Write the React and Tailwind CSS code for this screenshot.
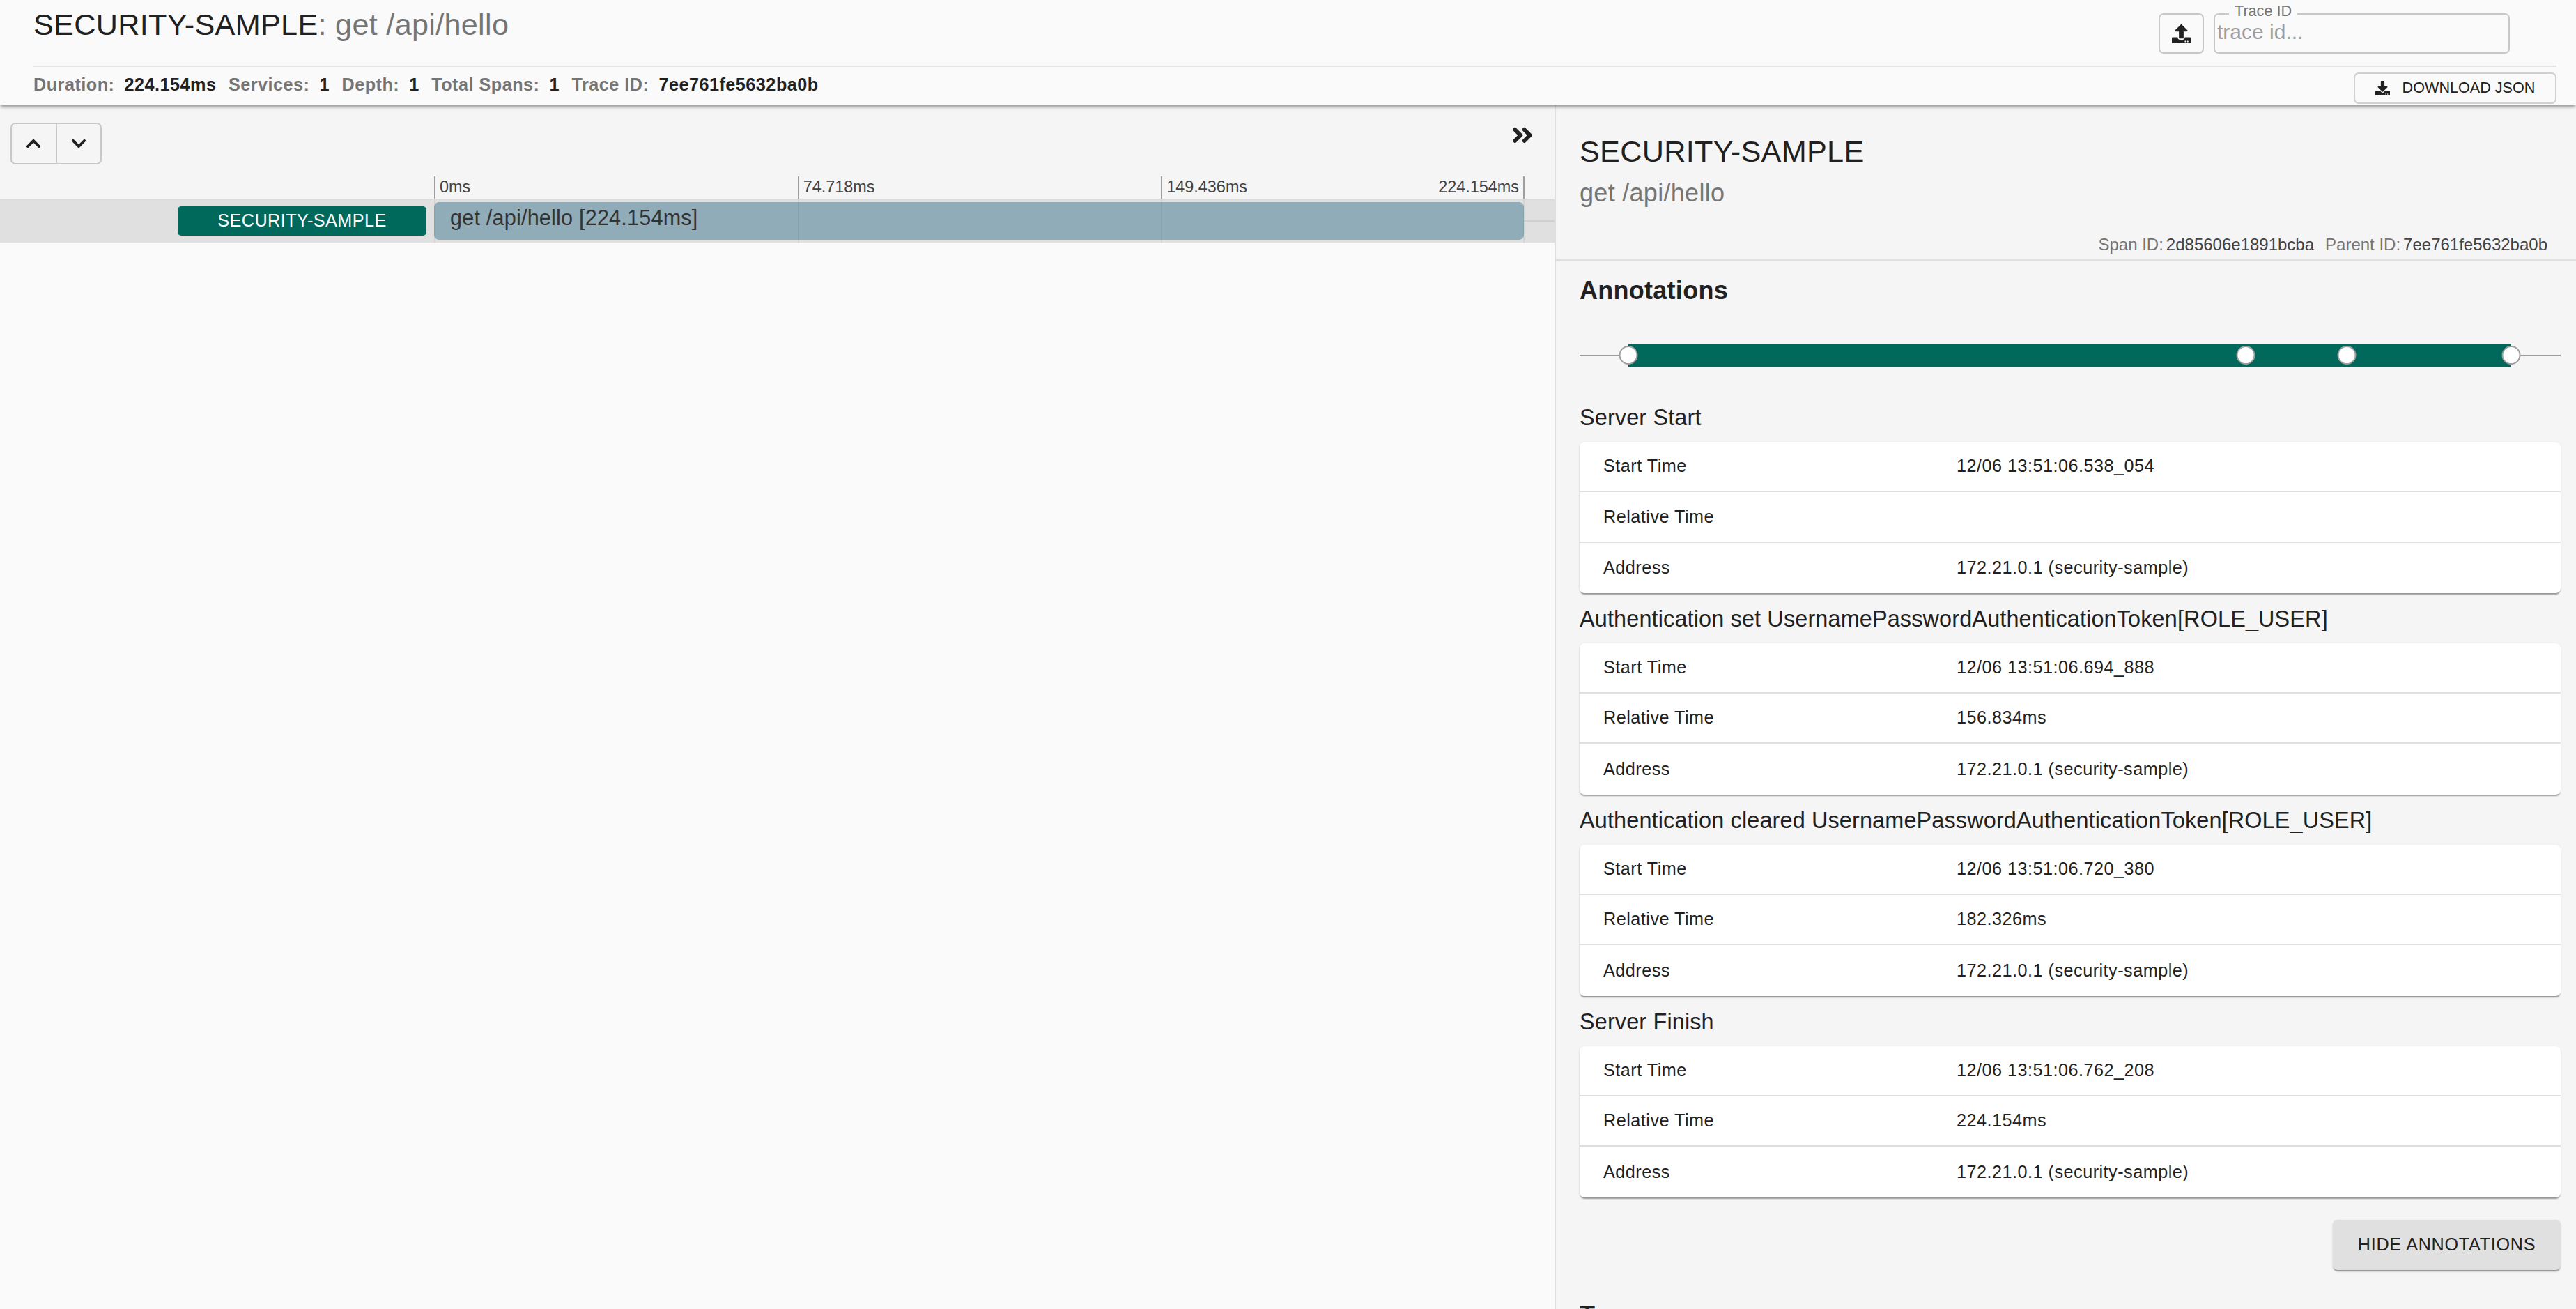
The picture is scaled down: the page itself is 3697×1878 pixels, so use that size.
import { FaAngleDoubleRight, FaChevronDown, FaChevronUp, FaDownload, FaUpload } from "react-icons/fa";

const DURATION = 224.154;

const annotations = [
  { title: "Server Start", start: "12/06 13:51:06.538_054", relative: "", at: 0 },
  { title: "Authentication set UsernamePasswordAuthenticationToken[ROLE_USER]", start: "12/06 13:51:06.694_888", relative: "156.834ms", at: 156.834 },
  { title: "Authentication cleared UsernamePasswordAuthenticationToken[ROLE_USER]", start: "12/06 13:51:06.720_380", relative: "182.326ms", at: 182.326 },
  { title: "Server Finish", start: "12/06 13:51:06.762_208", relative: "224.154ms", at: DURATION },
];

const summary = [
  ["Duration:", "224.154ms"],
  ["Services:", "1"],
  ["Depth:", "1"],
  ["Total Spans:", "1"],
  ["Trace ID:", "7ee761fe5632ba0b"],
];

const TableRow = ({ label, value, last }) => (
  <div className={`flex h-[72.3px] items-center pl-[34px] text-[25.2px] tracking-[0.5px] text-[#212121] ${last ? "" : "border-b-2 border-[#e0e0e0]"}`}>
    <span className="w-[507px]">{label}</span>
    <span>{value}</span>
  </div>
);

const AnnotationCard = ({ annotation }) => (
  <div className="mb-[11px]">
    <h6 className="mb-[8px] flex h-[53px] items-center text-[32.4px] leading-none tracking-[0.15px] text-[#212121]">{annotation.title}</h6>
    <div className="rounded-[7px] bg-white shadow-[0_3px_2px_-1px_rgba(0,0,0,0.35),0_1px_3px_rgba(0,0,0,0.12)]">
      <TableRow label="Start Time" value={annotation.start} />
      <TableRow label="Relative Time" value={annotation.relative} />
      <TableRow label="Address" value="172.21.0.1 (security-sample)" last />
    </div>
  </div>
);

export default function App() {
  return (
    <div className="flex h-screen w-full flex-col overflow-hidden bg-[#fafafa] font-['Liberation_Sans',Arial,sans-serif] text-[#212121]">
      <header className="z-10 h-[150px] shrink-0 bg-[#fafafa] pl-[48px] pr-[28px] shadow-[0_4px_5px_-1px_rgba(0,0,0,0.45)]">
        <div className="flex h-[96px] items-start justify-between border-b-2 border-[#e5e5e5]">
          <h1 className="mt-[9px] text-[43.2px] leading-[52px] tracking-[0.3px]">
            SECURITY-SAMPLE<span className="text-[#757575]">: get /api/hello</span>
          </h1>
          <div className="mr-[67px] mt-[19px] flex gap-[14px]">
            <button className="flex h-[58px] w-[65px] items-center justify-center rounded-[7px] border-2 border-[#c8c8c8] text-[27px] text-[#212121]">
              <FaUpload />
            </button>
            <div className="relative h-[58px] w-[425px] rounded-[7px] border-2 border-[#c8c8c8] pl-[3px] text-[30px] leading-[50px] text-[#9e9e9e]">
              trace id...
              <span className="absolute left-[20px] top-[-18px] bg-[#fafafa] px-[8px] text-[21.6px] leading-[26px] text-[#757575]">Trace ID</span>
            </div>
          </div>
        </div>
        <div className="flex h-[52px] items-start justify-between">
          <div className="mt-[11px] flex gap-[17.5px] text-[25.2px] font-bold leading-[28px] tracking-[0.5px]">
            {summary.map(([label, value]) => (
              <span key={label} className="flex gap-[14px]">
                <span className="text-[#757575]">{label}</span>
                <span>{value}</span>
              </span>
            ))}
          </div>
          <button className="mt-[8px] flex h-[45px] w-[291px] items-center justify-center gap-[18px] rounded-[7px] border-2 border-[#d0d0d0] bg-[#fafafa] text-[21.6px]">
            <FaDownload className="text-[21px]" />
            DOWNLOAD JSON
          </button>
        </div>
      </header>

      <main className="flex min-h-0 flex-1">
        <section className="w-[2231px] shrink-0">
          <div className="h-[135px] bg-[#f5f5f5]">
            <div className="flex h-[103px] items-start justify-between pl-[15px] pr-[28px] pt-[26px]">
              <div className="flex h-[60px] w-[131px] rounded-[7px] border-2 border-[#c8c8c8] text-[24px]">
                <button className="flex flex-1 items-center justify-center border-r-2 border-[#c8c8c8]"><FaChevronUp /></button>
                <button className="flex flex-1 items-center justify-center"><FaChevronDown /></button>
              </div>
              <FaAngleDoubleRight className="text-[36px]" />
            </div>
            <div className="ml-[623px] grid h-[32px] w-[1565px] grid-cols-3 text-[23.4px] leading-[30px] text-[#424242]">
              <span className="border-l-2 border-[#9e9e9e] pl-[6px]">0ms</span>
              <span className="border-l-2 border-[#9e9e9e] pl-[6px]">74.718ms</span>
              <span className="flex justify-between border-x-2 border-[#9e9e9e] px-[6px]">
                <span>149.436ms</span>
                <span>224.154ms</span>
              </span>
            </div>
          </div>

          <div className="relative flex h-[64px] items-center bg-[#e0e0e0] shadow-[inset_0_3px_2px_-2px_rgba(0,0,0,0.08)]">
            <div className="flex w-[623px] justify-end pr-[11px]">
              <div className="flex h-[42px] w-[357px] items-center justify-center rounded-[5px] bg-[#00695c] text-[25.2px] tracking-[0.45px] text-white">SECURITY-SAMPLE</div>
            </div>
            <div className="h-[54px] w-[1564px] rounded-[7px] bg-[#90acb8] pb-[4px] pl-[23px] text-[30.6px] leading-[44px] tracking-[0.2px] text-[#333]">
              get /api/hello [224.154ms]
            </div>
            <div className="h-[2px] flex-1 bg-[#d0d0d0]" />
            {/* tick lines run through the span row */}
            <div className="pointer-events-none absolute inset-y-0 left-[623px] grid w-[1565px] grid-cols-3">
              <span className="border-l-2 border-black/5" />
              <span className="border-l-2 border-black/5" />
              <span className="border-x-2 border-black/5" />
            </div>
          </div>
        </section>

        <aside className="min-w-0 flex-1 border-l-2 border-[#e0e0e0] bg-[#f5f5f5]">
          <div className="h-[224px] border-b-2 border-[#e0e0e0] pl-[34px] pr-[41px]">
            <h2 className="pt-[41px] text-[43.2px] leading-[52px] tracking-[0.3px]">SECURITY-SAMPLE</h2>
            <p className="mt-[12px] text-[36px] leading-[44px] tracking-[0.3px] text-[#757575]">get /api/hello</p>
            <p className="mt-[37px] text-right text-[24px] leading-[30px] text-[#424242]">
              <span className="mr-[4px] text-[#757575]">Span ID:</span>2d85606e1891bcba
              <span className="ml-[16px] mr-[4px] text-[#757575]">Parent ID:</span>7ee761fe5632ba0b
            </p>
          </div>

          <div className="pl-[34px] pr-[22px]">
            <h3 className="mb-[24px] flex h-[86px] items-center text-[36px] font-bold tracking-[0.27px]">Annotations</h3>
            {/* annotation timeline */}
            <div className="relative h-[52px]">
              <div className="absolute inset-x-0 top-[25px] h-[2px] bg-[#9e9e9e]" />
              <div className="absolute inset-y-[9px] left-[70px] w-[1267px]">
                <div className="h-full border-y border-[#7a9a95] bg-[#00695c]" />
                {annotations.map((a) => (
                  <span
                    key={a.title}
                    className="absolute top-[3px] h-[27px] w-[27px] -translate-x-1/2 rounded-full border-2 border-[#9e9e9e] bg-white"
                    style={{ left: `${(a.at / DURATION) * 100}%` }}
                  />
                ))}
              </div>
            </div>
            <div className="mt-[37px]">
              {annotations.map((a) => (
                <AnnotationCard key={a.title} annotation={a} />
              ))}
            </div>
            <div className="mt-[32px] flex justify-end">
              <button className="h-[72px] w-[327px] rounded-[7px] bg-[#e0e0e0] text-[25.2px] tracking-[0.72px] shadow-[0_3px_2px_-1px_rgba(0,0,0,0.35),0_1px_3px_rgba(0,0,0,0.12)]">
                HIDE ANNOTATIONS
              </button>
            </div>
            <h3 className="mt-[43px] text-[36px] font-bold leading-[44px] tracking-[0.27px]">Tags</h3>
          </div>
        </aside>
      </main>
    </div>
  );
}
